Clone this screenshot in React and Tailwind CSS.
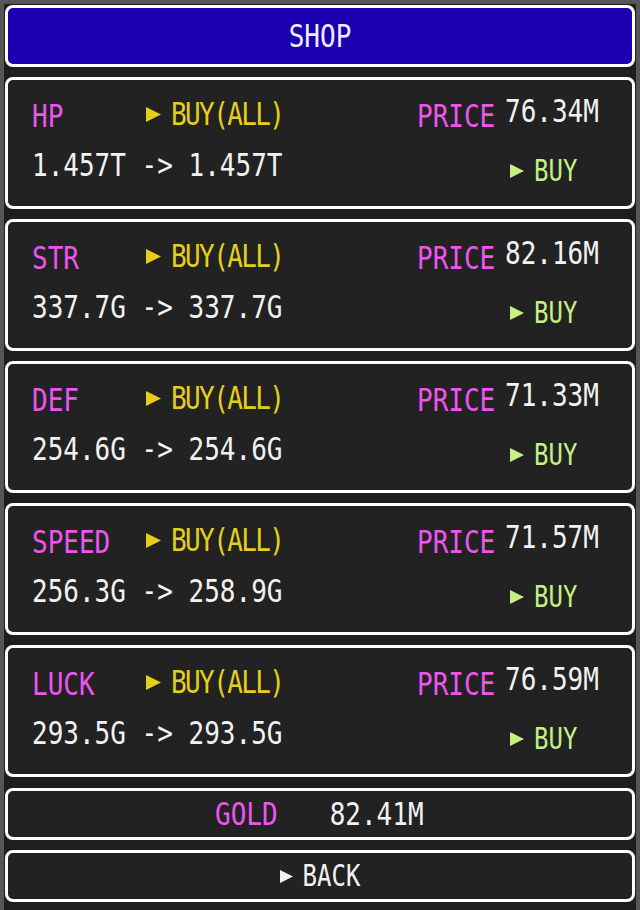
import React from 'react';

const stats = [
  { name: 'HP', from: '1.457T', to: '1.457T', price: '76.34M' },
  { name: 'STR', from: '337.7G', to: '337.7G', price: '82.16M' },
  { name: 'DEF', from: '254.6G', to: '254.6G', price: '71.33M' },
  { name: 'SPEED', from: '256.3G', to: '258.9G', price: '71.57M' },
  { name: 'LUCK', from: '293.5G', to: '293.5G', price: '76.59M' },
];

const Arrow = ({ color, size = 14 }) => (
  <svg width={size} height={size} viewBox="0 0 14 14" className="shrink-0">
    <path d="M0 0 L14 7 L0 14 Z" fill={color} />
  </svg>
);

// tall, narrow pixel-ish text
const T = ({ className = '', children }) => (
  <span className={`inline-block scale-y-125 whitespace-pre ${className}`}>{children}</span>
);

const StatPanel = ({ stat }) => (
  <div className="h-[132px] rounded-[8px] border-[3px] border-white bg-[#222222] pl-[24px] pt-[13px]">
    <div className="flex h-[40px] items-center">
      <div className="w-[114px] pt-[6px]">
        <T className="text-[#ee55ee]">{stat.name}</T>
      </div>
      <div className="flex w-[271px] items-center gap-[10px] pt-[2px]">
        <Arrow color="#e6cf1c" size={15} />
        <T className="tracking-[-1.6px] text-[#e6cf1c]">BUY(ALL)</T>
      </div>
      <div className="w-[88px] pt-[6px]">
        <T className="text-[#ee55ee]">PRICE</T>
      </div>
      <div className="-mt-[4px]">
        <T className="text-[#f2f2f2]">{stat.price}</T>
      </div>
    </div>
    <div className="mt-[12px] flex h-[40px] items-center">
      <div className="w-[478px]">
        <T className="text-[#f2f2f2]">{`${stat.from} -> ${stat.to}`}</T>
      </div>
      <div className="flex items-center gap-[10px] pt-[12px]">
        <Arrow color="#c4f084" size={14} />
        <T className="text-[24px] text-[#c4f084]">BUY</T>
      </div>
    </div>
  </div>
);

export default function App() {
  return (
    <div
      className="flex h-[910px] w-[640px] flex-col border-x-4 border-t-4 border-[#565656] bg-[#1e1e1e] px-px pt-px text-[26px] leading-none"
      style={{ fontFamily: '"DejaVu Sans Mono", "Liberation Mono", monospace' }}
    >
      <div className="flex h-[62px] items-center justify-center rounded-[8px] border-[3px] border-white bg-[#1a00b0]">
        <T className="text-[#eeeeff]">SHOP</T>
      </div>
      <div className="mt-[10px] flex flex-col gap-[10px]">
        {stats.map((s) => (
          <StatPanel key={s.name} stat={s} />
        ))}
      </div>
      <div className="mt-[11px] flex h-[52px] items-center rounded-[8px] border-[3px] border-white bg-[#222222] pl-[207px]">
        <T className="text-[#ee55ee]">GOLD</T>
        <T className="ml-[52px] text-[#f2f2f2]">82.41M</T>
      </div>
      <div className="mt-[10px] flex h-[52px] items-center justify-center gap-[10px] rounded-[8px] border-[3px] border-white bg-[#222222]">
        <Arrow color="#f2f2f2" size={13} />
        <T className="text-[24px] text-[#f2f2f2]">BACK</T>
      </div>
    </div>
  );
}
